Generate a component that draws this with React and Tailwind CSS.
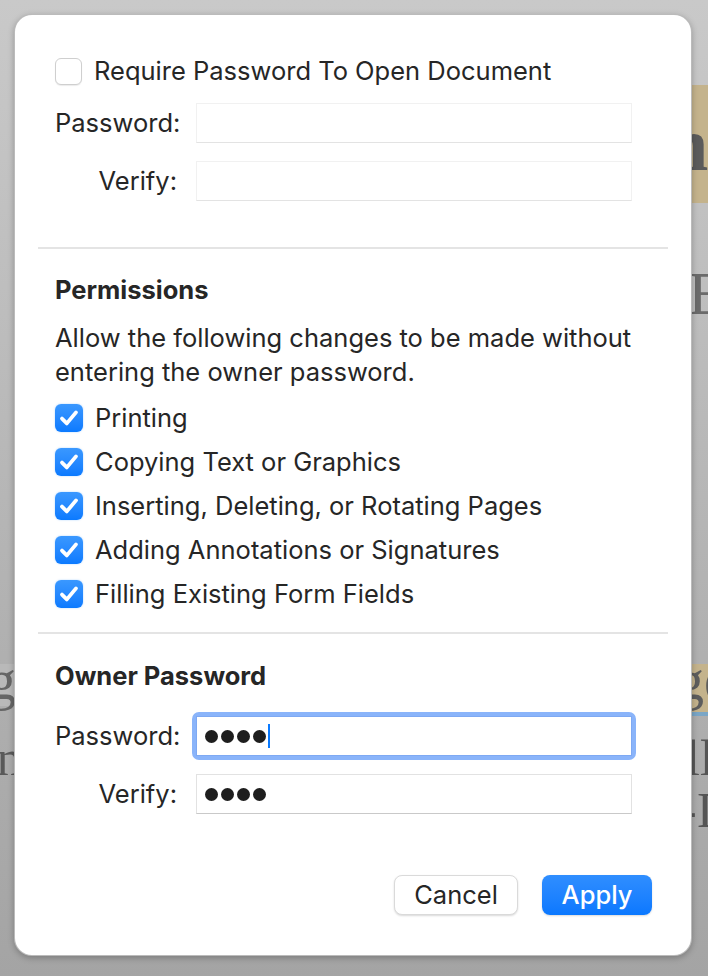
import React from "react";

function Check({ checked }) {
  if (!checked) {
    return (
      <div className="w-[27px] h-[27px] rounded-[6px] border border-[#cfcfcf] bg-white shadow-[0_1px_1px_rgba(0,0,0,0.08)] shrink-0" />
    );
  }
  return (
    <div className="w-[28px] h-[28px] rounded-[6px] bg-gradient-to-b from-[#3a98ff] to-[#0a7aff] flex items-center justify-center shrink-0 shadow-[0_0_2px_rgba(10,122,255,0.35)]">
      <svg width="28" height="28" viewBox="0 0 28 28" fill="none">
        <path d="M7 14.6 L11.8 19.4 L21 8.4" stroke="white" strokeWidth="3.8" strokeLinecap="round" strokeLinejoin="round" />
      </svg>
    </div>
  );
}

function Dots() {
  return (
    <div className="flex items-center gap-[3px]">
      <span className="w-[13px] h-[13px] rounded-full bg-[#1e1e1e]" />
      <span className="w-[13px] h-[13px] rounded-full bg-[#1e1e1e]" />
      <span className="w-[13px] h-[13px] rounded-full bg-[#1e1e1e]" />
      <span className="w-[13px] h-[13px] rounded-full bg-[#1e1e1e]" />
    </div>
  );
}

function Field({ label, faint, focused, children, className = "" }) {
  return (
    <div className={`flex items-center h-[40px] ${className}`}>
      <div className="w-[122px] text-right text-[25.5px] leading-[30px] text-[#262626] whitespace-nowrap">{label}</div>
      <div className="ml-[19px] w-[436px] h-[40px] relative">
        {focused && (
          <div className="absolute -inset-[4px] rounded-[7px] bg-[#8ab4fa]" />
        )}
        <div
          className={`absolute inset-0 bg-white flex items-center pl-[8px] border ${
            faint
              ? "border-[#f1f1f1] border-b-[#e3e3e3]"
              : focused
              ? "border-[#7ea9f3]"
              : "border-[#e2e2e2] border-b-[#c9c9c9]"
          }`}
        >
          {children}
        </div>
      </div>
    </div>
  );
}

export default function App() {
  const perms = [
    "Printing",
    "Copying Text or Graphics",
    "Inserting, Deleting, or Rotating Pages",
    "Adding Annotations or Signatures",
    "Filling Existing Form Fields",
  ];
  const serif = { fontFamily: "'Liberation Serif', serif" };
  return (
    <div
      className="relative w-[708px] h-[976px] overflow-hidden bg-gradient-to-b from-[#c9c9c9] to-[#a4a4a4]"
      style={{ fontFamily: "Inter, 'Noto Sans', sans-serif" }}
    >
      {/* document behind the sheet */}
      <div className="absolute left-[600px] top-[85px] w-[108px] h-[118px] bg-[#c4b38c]" />
      <div className="absolute left-[666px] top-[104px] text-[76px] leading-[80px] font-bold text-[#5b5b5b] whitespace-nowrap" style={serif}>
        n
      </div>
      <div className="absolute left-[688px] top-[258px] text-[62px] leading-[70px] text-[#6a6a6a] whitespace-nowrap" style={serif}>
        E
      </div>
      <div className="absolute left-[600px] top-[664px] w-[108px] h-[50px] bg-[#c4b38c]" />
      <div className="absolute left-[600px] top-[712px] w-[108px] h-[4px] bg-[#7aa6c6]" />
      <div className="absolute left-[676px] top-[650px] text-[56px] leading-[60px] text-[#5d5d5d] whitespace-nowrap" style={serif}>
        ge
      </div>
      <div className="absolute left-[686px] top-[730px] text-[50px] leading-[56px] text-[#555] whitespace-nowrap" style={serif}>
        ll
      </div>
      <div className="absolute left-[680px] top-[782px] text-[50px] leading-[56px] text-[#555] whitespace-nowrap" style={serif}>
        -I
      </div>
      <div className="absolute left-0 top-[664px] w-[60px] h-[42px] bg-[#b9b9b9]" />
      <div className="absolute -left-[12px] top-[650px] text-[56px] leading-[60px] text-[#666] whitespace-nowrap" style={serif}>
        g
      </div>
      <div className="absolute -left-[20px] top-[730px] text-[50px] leading-[56px] text-[#5a5a5a] whitespace-nowrap" style={serif}>
        rn
      </div>

      {/* sheet */}
      <div className="relative ml-[14px] mt-[14px] w-[678px] h-[942px] bg-white rounded-[18px] border border-[#8d8d8d]/60 shadow-[0_2px_6px_rgba(0,0,0,0.25)] text-[#262626]">
        <div className="pl-[40px] pt-[42px]">
          <div className="flex items-center h-[28px] gap-[12px]">
            <Check checked={false} />
            <span className="text-[25.5px] leading-[30px]">Require Password To Open Document</span>
          </div>
          <Field label="Password:" faint className="mt-[18px]" />
          <Field label="Verify:" faint className="mt-[18px]" />
        </div>

        <div className="mx-[23px] mt-[46px] h-[2px] bg-[#e4e4e4]" />

        <div className="pl-[40px]">
          <div className="mt-[26px] text-[25.5px] leading-[30px] font-bold">Permissions</div>
          <div className="mt-[16px] text-[25.5px] leading-[34px] w-[610px]">
            Allow the following changes to be made without entering the owner password.
          </div>
          <div className="mt-[7px] flex flex-col">
            {perms.map((p) => (
              <div key={p} className="flex items-center h-[44px] gap-[12px]">
                <Check checked />
                <span className="text-[25.5px] leading-[30px]">{p}</span>
              </div>
            ))}
          </div>
        </div>

        <div className="mx-[23px] mt-[16px] h-[2px] bg-[#e4e4e4]" />

        <div className="pl-[40px]">
          <div className="mt-[27px] text-[25.5px] leading-[30px] font-bold">Owner Password</div>
          <Field label="Password:" focused className="mt-[25px]">
            <Dots />
            <span className="ml-[2px] w-[2px] h-[24px] bg-[#0a7aff]" />
          </Field>
          <Field label="Verify:" className="mt-[18px]">
            <Dots />
          </Field>
        </div>

        <div className="mt-[61px] pr-[39px] flex justify-end gap-[24px]">
          <button className="w-[124px] h-[40px] rounded-[8px] bg-white border border-[#dadada] shadow-[0_1px_2px_rgba(0,0,0,0.15)] text-[25.5px] leading-[30px] text-[#262626]">
            Cancel
          </button>
          <button className="w-[110px] h-[40px] rounded-[8px] bg-gradient-to-b from-[#2f8eff] to-[#0a78ff] shadow-[0_1px_2px_rgba(0,0,0,0.15)] text-[25.5px] leading-[30px] text-white font-medium">
            Apply
          </button>
        </div>
      </div>
    </div>
  );
}
